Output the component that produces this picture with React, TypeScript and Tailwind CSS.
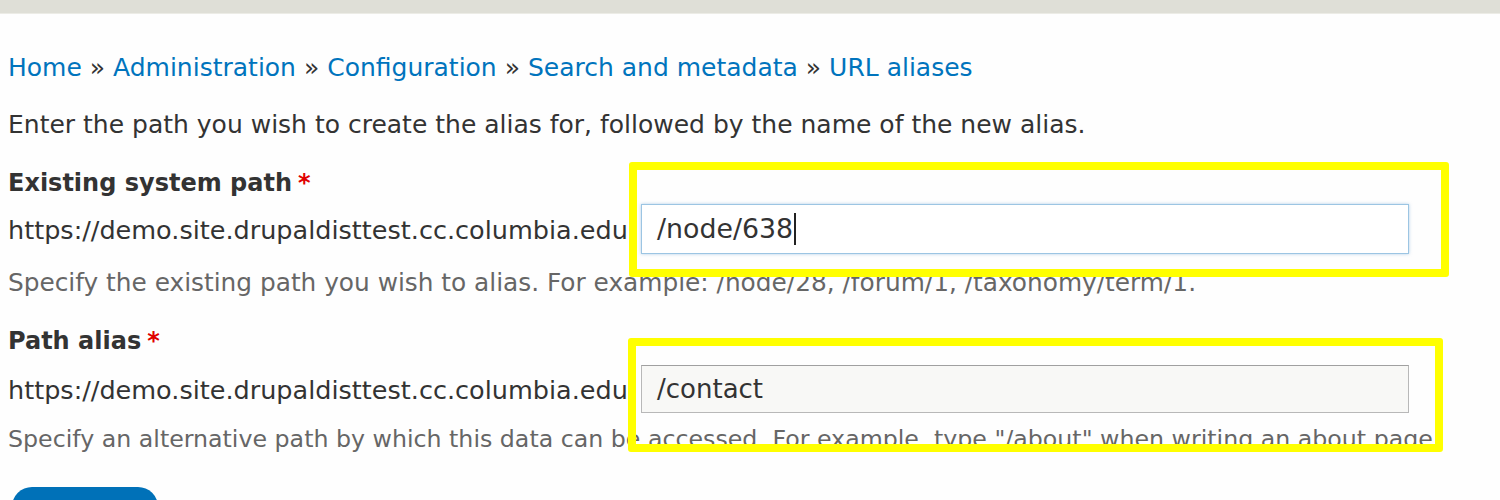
import React from "react";

const font = { fontFamily: '"DejaVu Sans", "Liberation Sans", sans-serif' };

export default function App() {
  return (
    <div className="relative w-[1500px] h-[500px] overflow-hidden bg-[#fefefe] text-[#333333]" style={font}>
      <div className="h-[14px] bg-[#dfdfd7] border-b border-[#ecece6]" />
      <div className="pl-[8px] pt-[38px]">
        <div className="h-[32px] flex items-center text-[25px] whitespace-nowrap">
          <span className="text-[#0074bd]">Home</span>
          <span className="whitespace-pre text-[#333]"> » </span>
          <span className="text-[#0074bd]">Administration</span>
          <span className="whitespace-pre text-[#333]"> » </span>
          <span className="text-[#0074bd]">Configuration</span>
          <span className="whitespace-pre text-[#333]"> » </span>
          <span className="text-[#0074bd]">Search and metadata</span>
          <span className="whitespace-pre text-[#333]"> » </span>
          <span className="text-[#0074bd]">URL aliases</span>
        </div>
        <div className="mt-[25px] h-[32px] flex items-center text-[25px] whitespace-nowrap">
          Enter the path you wish to create the alias for, followed by the name of the new alias.
        </div>
        <div className="mt-[26px] h-[32px] flex items-center text-[24px] font-bold whitespace-nowrap">
          Existing system path<span className="ml-[6px] text-[#e00000] self-start mt-[-2px]">*</span>
        </div>
        <div className="mt-[5px] flex items-center">
          <span className="text-[25.5px] whitespace-nowrap w-[633px] overflow-hidden pt-[3px]">https://demo.site.drupaldisttest.cc.columbia.edu</span>
          <div className="w-[768px] h-[50px] border border-[#9cc5e3] shadow-[0_0_3px_rgba(100,160,210,0.5)] bg-white flex items-center pl-[15px] text-[26.8px]">
            /node/638<span className="inline-block w-[1.5px] h-[32px] bg-[#222] ml-[1px]" />
          </div>
        </div>
        <div className="mt-[14px] h-[30px] flex items-center text-[24.8px] text-[#666] whitespace-nowrap">
          Specify the existing path you wish to alias. For example: /node/28, /forum/1, /taxonomy/term/1.
        </div>
        <div className="mt-[27px] h-[32px] flex items-center text-[24px] font-bold whitespace-nowrap">
          Path alias<span className="ml-[6px] text-[#e00000] self-start mt-[-2px]">*</span>
        </div>
        <div className="mt-[8px] flex items-center">
          <span className="text-[25.5px] whitespace-nowrap w-[633px] overflow-hidden pt-[3px]">https://demo.site.drupaldisttest.cc.columbia.edu</span>
          <div className="w-[768px] h-[48px] border border-[#b8b8b8] border-t-[#a0a0a0] bg-[#f8f8f6] flex items-center pl-[15px] text-[26px]">
            /contact
          </div>
        </div>
        <div className="mt-[12px] h-[30px] w-[1433px] overflow-hidden flex items-center text-[23.7px] text-[#666] whitespace-nowrap">
          Specify an alternative path by which this data can be accessed. For example, type "/about" when writing an about page.
        </div>
        <div className="mt-[32px] ml-[4px] w-[146px] h-[40px] rounded-[20px] bg-[#0071b8]" />
      </div>
      <div className="absolute left-[629px] top-[162px] w-[820px] h-[115px] border-[8px] border-[#ffff00] rounded-[3px]" />
      <div className="absolute left-[628px] top-[338px] w-[815px] h-[114px] border-[8px] border-[#ffff00] rounded-[3px]" />
    </div>
  );
}
